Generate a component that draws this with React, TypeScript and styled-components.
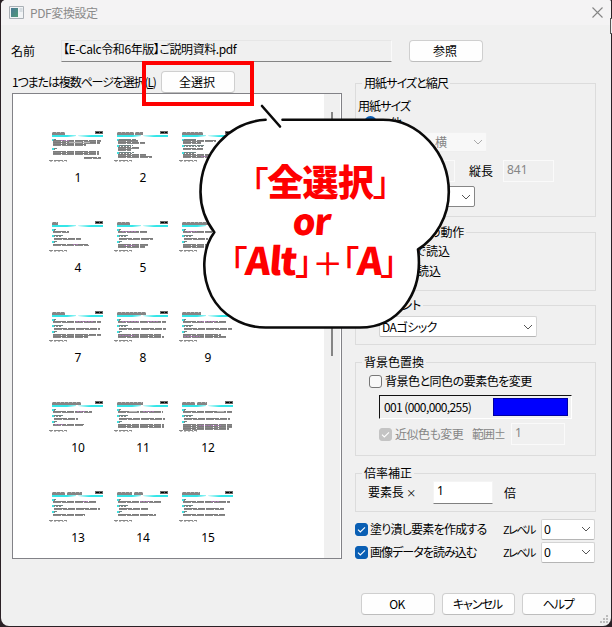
import React from 'react';
import styled, { createGlobalStyle, css } from 'styled-components';

const GlobalStyle = createGlobalStyle`
  * { box-sizing: border-box; }
  body {
    margin: 0;
    background: #2b2126;
    font-family: 'Noto Sans', 'Noto Sans CJK JP', sans-serif;
    font-size: 12px;
    color: #000;
    overflow: hidden;
  }
`;

const Dialog = styled.div`
  position: relative;
  width: 610px;
  height: 626px;
  margin-left: 1px;
  background: #f0f0f0;
  border-radius: 5px 2px 8px 8px;
  overflow: hidden;
`;

const TitleBar = styled.header`
  display: flex;
  align-items: center;
  height: 25px;
  padding: 0 8px;
  background: #f4f3f4;
  svg { display: block; }
`;

const Label = styled.span<{ $ls?: number; $dim?: boolean; $w?: number; $size?: number }>`
  display: block;
  flex: none;
  white-space: nowrap;
  line-height: 16px;
  font-family: 'Noto Sans CJK JP', sans-serif;
  font-feature-settings: 'palt';
  font-size: ${p => p.$size ?? 12}px;
  letter-spacing: ${p => p.$ls ?? 0}px;
  ${p => p.$w && css`width: ${p.$w}px;`}
  ${p => p.$dim && css`color: #858585;`}
`;

const Title = styled(Label)`
  flex: 1;
  margin-left: 6px;
  color: #8a8a8a;
`;

const FileRow = styled.div`
  display: flex;
  align-items: center;
  height: 21px;
  margin: 15px 0 0 10px;
`;

const FileField = styled.div`
  display: flex;
  align-items: center;
  width: 331px;
  height: 22px;
  margin-right: 17px;
  padding: 0 0 3px 1px;
  border: 1px solid #e6e6e6;
  border-right-color: #fafafa;
  border-bottom: 1px solid #858585;
`;

const Button = styled.button`
  display: flex;
  align-items: center;
  justify-content: center;
  width: 74px;
  height: 22px;
  padding: 0 2px 0 0;
  background: #fefefe;
  border: 1px solid #cfcfcf;
  border-bottom-color: #bdbdbd;
  border-radius: 4px;
  color: #000;
`;

const Columns = styled.main`
  display: flex;
  margin: 10px 0 0 11px;
`;

const Left = styled.section`
  width: 343px;
`;

const SelectRow = styled.div`
  display: flex;
  align-items: center;
  height: 22px;
  button { margin-left: auto; margin-right: 120px; }
`;

const PageList = styled.div`
  display: flex;
  justify-content: space-between;
  width: 330px;
  height: 466px;
  background: #fff;
  border: 1px solid #828287;
`;

const PageGrid = styled.div`
  display: grid;
  grid-template-columns: repeat(3, 65px);
  grid-auto-rows: 90px;
  padding: 37px 0 0 34px;
`;

const Page = styled.figure`
  display: flex;
  flex-direction: column;
  align-items: center;
  width: 62px;
  margin: 0;
  svg { display: block; margin-right: 2px; }
`;

const PageNumber = styled.figcaption`
  margin-top: 7px;
  line-height: 16px;
  font-size: 12px;
`;

const ScrollTrack = styled.div`
  display: flex;
  justify-content: center;
  width: 16px;
  margin-right: 1px;
  padding: 18px 0 0 0;
  background: #f0f0f0;
`;

const ScrollThumb = styled.div`
  width: 2px;
  height: 244px;
  background: #858585;
`;

const Right = styled.section`
  width: 241px;
  padding-top: 5px;
`;

const Group = styled.fieldset<{ $h: number; $pad: number; $gap: number }>`
  width: 241px;
  height: ${p => p.$h}px;
  min-width: 0;
  margin: 0 0 ${p => p.$gap}px;
  padding: ${p => p.$pad}px 0 0 0;
  border: 1px solid #dcdcdc;
`;

const Legend = styled.legend<{ $x?: number }>`
  height: 14px;
  margin-left: ${p => p.$x ?? 6}px;
  padding: 0 2px;
  > span { line-height: 14px; }
`;

const Row = styled.div<{ $h: number; $x?: number; $mt?: number }>`
  display: flex;
  align-items: center;
  height: ${p => p.$h}px;
  margin: ${p => p.$mt ?? 0}px 0 0 ${p => p.$x ?? 0}px;
`;

const Gap = styled.span<{ $w: number }>`
  flex: none;
  width: ${p => p.$w}px;
`;

const Combo = styled.div<{ $w: number; $tone?: 'disabled' | 'strong'; $h?: number }>`
  display: flex;
  flex: none;
  align-items: center;
  justify-content: space-between;
  width: ${p => p.$w}px;
  height: ${p => p.$h ?? 21}px;
  padding: 0 3px 0 2px;
  background: ${p => (p.$tone === 'disabled' ? '#f8f8f8' : '#fff')};
  color: ${p => (p.$tone === 'disabled' ? '#858585' : '#000')};
  border: 1px solid ${p => (p.$tone === 'disabled' ? '#f1f1f1' : p.$tone === 'strong' ? '#868686' : '#d4d4d4')};
  border-bottom-color: ${p => (p.$tone === 'disabled' ? '#eee' : p.$tone === 'strong' ? '#868686' : '#b5b5b5')};
  border-radius: 2px;
`;

const Input = styled.div<{ $w: number; $disabled?: boolean; $h?: number }>`
  flex: none;
  width: ${p => p.$w}px;
  height: ${p => p.$h ?? 22}px;
  padding-left: 3px;
  line-height: 18px;
  background: ${p => (p.$disabled ? '#f0f0f0' : '#fff')};
  color: ${p => (p.$disabled ? '#858585' : '#000')};
  border: 1px solid ${p => (p.$disabled ? '#fafafa' : '#f4f4f4')};
  border-bottom-color: ${p => (p.$disabled ? '#fafafa' : '#808080')};
`;

const Radio = styled.span<{ $on?: boolean }>`
  flex: none;
  width: 13px;
  height: 13px;
  margin-right: 4px;
  border: ${p => (p.$on ? '4px solid #0a5fb4' : '1px solid #808080')};
  border-radius: 50%;
  background: #fff;
`;

const Box = styled.span<{ $tone?: 'on' | 'disabled' }>`
  display: flex;
  flex: none;
  align-items: center;
  justify-content: center;
  width: 13px;
  height: 13px;
  margin-right: 2px;
  border-radius: 3px;
  border: 1px solid ${p => (p.$tone === 'on' ? '#0a5fb4' : p.$tone === 'disabled' ? '#c4c4c4' : '#777')};
  background: ${p => (p.$tone === 'on' ? '#0a5fb4' : p.$tone === 'disabled' ? '#c4c4c4' : '#f8f8f8')};
`;

const ColorField = styled.div`
  display: flex;
  align-items: center;
  justify-content: space-between;
  width: 193px;
  height: 24px;
  margin: 7px 0 0 23px;
  padding: 0 3px 1px 4px;
  border: 1px solid #fff;
  border-top-color: #111;
  border-left-color: #111;
`;

const Swatch = styled.span`
  width: 75px;
  height: 18px;
  background: #0000fe;
  border: 1px solid #0000a0;
`;

const Footer = styled.footer`
  display: flex;
  gap: 7px;
  margin: 30px 0 0 6px;
`;

const Highlight = styled.div`
  position: absolute;
  left: 142px;
  top: 61px;
  width: 112px;
  height: 45px;
  border: 4px solid #fe0000;
`;

const Balloon = styled.div`
  position: absolute;
  left: 190px;
  top: 95px;
  width: 270px;
  height: 240px;
  > svg { position: absolute; inset: 0; }
`;

const BalloonText = styled.div`
  padding-top: 65px;
`;

const BalloonLine = styled.div<{ $h: number; $ls: number; $x: number }>`
  position: relative;
  width: max-content;
  height: ${p => p.$h}px;
  line-height: ${p => p.$h}px;
  margin-left: ${p => p.$x}px;
  font-family: 'Noto Sans CJK JP', sans-serif;
  font-feature-settings: 'palt';
  font-weight: 900;
  font-size: 36px;
  letter-spacing: ${p => p.$ls}px;
  color: #fe0000;
  white-space: nowrap;
`;

const Bracket = styled.span<{ $pull?: number; $size?: number }>`
  font-weight: 500;
  font-size: ${p => p.$size ?? 34}px;
  margin-right: ${p => p.$pull ?? 0}px;
`;

const Latin = styled.span<{ $ls?: number; $size?: number }>`
  display: inline-block;
  font-size: ${p => p.$size ?? 36}px;
  letter-spacing: ${p => p.$ls ?? 0}px;
  transform: skewX(-5deg);
`;

const Grip = styled.div`
  position: absolute;
  right: 2px;
  bottom: 2px;
  svg { display: block; }
`;

const Corner = styled.div`
  position: absolute;
  left: 610px;
  top: 18px;
  width: 2px;
  height: 16px;
  border: 1px solid #555;
  border-right: 0;
  background: #eee;
`;

const Chevron = ({ dim }: { dim?: boolean }) => (
  <svg width="10" height="6" viewBox="0 0 10 6" fill="none" stroke={dim ? '#aaa' : '#555'} strokeWidth="1">
    <path d="M1 1l4 4 4-4" />
  </svg>
);

const Check = () => (
  <svg width="9" height="9" viewBox="0 0 9 9" fill="none" stroke="#fff" strokeWidth="1.1">
    <path d="M1 4.7l2.3 2.2L8 2.4" />
  </svg>
);

// Body strokes of a page preview: x, y, width, kind (0 text, 1 section mark, 2 tinted text, 3 pale text)
type Stroke = [number, number, number, number?];
type Preview = { title: [number, number][]; lines: Stroke[] };

const body = (a: number, b: number, c: number, extra: Stroke[] = []): Stroke[] => [
  [4, 8, 3, 1], [4, 10, a], [4, 14, 10, 1], [5, 17, b], [4, 20, 4, 1], [4, 23, c], ...extra,
];

const previews: Preview[] = [
  { title: [[3, 13]], lines: [[4, 8, 3, 1], [4, 9, 48], [12, 9, 8, 2], [4, 11, 47], [20, 11, 22, 3], [4, 13, 33], [4, 17, 4, 1], [4, 20, 46], [4, 22, 46], [35, 26, 17]] },
  { title: [[3, 17], [21, 8]], lines: [[4, 8, 18, 1], [4, 9, 20], [4, 11, 27], [4, 14, 15, 1], [4, 16, 22], [4, 18, 13], [4, 21, 16, 1], [4, 23, 28], [4, 25, 34]] },
  { title: [[3, 21]], lines: [[4, 8, 14, 1], [4, 9, 33], [4, 11, 18], [4, 14, 22, 1], [4, 17, 20], [4, 21, 14, 1], [4, 23, 30], [4, 25, 24], [22, 25, 10, 2]] },
  { title: [[3, 6]], lines: body(16, 27, 36, [[24, 23, 6, 2]]) },
  { title: [[3, 13]], lines: body(29, 34, 30, [[8, 10, 14, 2], [4, 25, 27], [10, 24, 12, 2]]) },
  { title: [[3, 29]], lines: body(29, 24, 32, [[4, 25, 32], [8, 10, 10, 2]]) },
  { title: [[3, 13]], lines: body(48, 46, 48, [[27, 10, 17, 2], [4, 25, 35]]) },
  { title: [[3, 29]], lines: body(48, 47, 44, [[8, 10, 17, 2], [33, 10, 12, 2], [4, 25, 46], [5, 24, 16, 2]]) },
  { title: [[3, 19]], lines: body(44, 48, 38, [[20, 10, 17, 2], [4, 25, 44], [5, 25, 16, 2]]) },
  { title: [[3, 29]], lines: body(39, 24, 31, [[28, 10, 8, 2], [6, 23, 8, 2]]) },
  { title: [[3, 26]], lines: body(45, 46, 46, [[15, 10, 8, 3], [29, 10, 12, 2], [4, 25, 46]]) },
  { title: [[3, 13], [18, 10]], lines: body(49, 46, 49, [[38, 10, 7, 3], [4, 25, 49], [20, 24, 22, 2], [4, 27, 46]]) },
  { title: [[3, 13], [18, 15]], lines: body(44, 46, 32, [[34, 10, 6, 2]]) },
  { title: [[3, 15], [20, 9]], lines: body(44, 29, 38, [[26, 10, 10, 2]]) },
  { title: [[3, 18]], lines: body(47, 40, 42, [[32, 10, 8, 2]]) },
];

const strokeColor = ['#7c7c7c', '#6f8585', '#a878b0', '#b8b8b8'];

const PagePreview = ({ title, lines }: Preview) => (
  <svg width="56" height="32" viewBox="0 0 56 32" shapeRendering="crispEdges" fill="none">
    {title.map(([x, w], i) => (
      <g key={i}>
        <rect x={x} y="1" width={w} height="3" fill="#858585" />
        <path d={`M${x} 1.5h${w}`} stroke="#bbb" strokeDasharray="1 3" />
      </g>
    ))}
    <path d="M3 4h15l9 .600v.400l-9 1H3zM54 4H43l-14 .800v.300L40 6h14z" fill="#35e6e8" shapeRendering="auto" />
    <path d="M3 4.500h13M46 4.500h8M3 5.500h14M41 5.500h13" stroke="#35e6e8" />
    <rect x="46" y="0" width="8" height="3" fill="#666" />
    <path d="M47 1.500h6" stroke="#000" strokeDasharray="3 1" />
    {lines.map(([x, y, w, kind = 0], i) => (
      <g key={i}>
        <path d={`M${x} ${y + 0.5}h${w}`} stroke={strokeColor[kind]} strokeDasharray={kind === 2 ? '2 1' : '13 1 7 1'} />
        {kind === 0 && <path d={`M${x} ${y + 1.5}h${w}`} stroke="#888" strokeDasharray="8 1 12 1" />}
        {kind === 1 && <path d={`M${x} ${y + 1.5}h${Math.max(3, w - 2)}`} stroke="#858585" strokeDasharray="2 1" />}
        {kind === 1 && <path d={`M3 ${y}h2v2h-2z`} fill="#43dede" />}
      </g>
    ))}
    <path d="M0 29.500h18" stroke="#8a8a8a" strokeDasharray="4 1 9 1" />
    <path d="M1 30.500h17" stroke="#bbb" strokeDasharray="2 2" />
  </svg>
);

const App = () => (
  <>
    <GlobalStyle />
    <Dialog>
      <TitleBar>
        <svg width="15" height="13" viewBox="0 0 15 13">
          <defs>
            <linearGradient id="appIcon" x1="0" y1="0" x2="1" y2="1">
              <stop offset="0" stopColor="#4b7896" />
              <stop offset="1" stopColor="#4f9a78" />
            </linearGradient>
          </defs>
          <path d="M.5.5h14v12H.5z" fill="#f2f4f6" stroke="#aab0b6" />
          <path d="M2 2h7v9H2z" fill="url(#appIcon)" />
          <path d="M10.500 3h3M10.500 5h3" stroke="#b9c4cc" />
        </svg>
        <Title $ls={-0.4}>PDF変換設定</Title>
        <svg width="11" height="11" viewBox="0 0 11 11" stroke="#858585" strokeWidth="1.1">
          <path d="M.5.5l10 10M10.500.5l-10 10" />
        </svg>
      </TitleBar>

      <FileRow>
        <Label $w={50}>名前</Label>
        <FileField><Label $ls={-0.42}>【E-Calc令和6年版】ご説明資料.pdf</Label></FileField>
        <Button><Label>参照</Label></Button>
      </FileRow>

      <Columns>
        <Left>
          <SelectRow>
            <Label $ls={-1.12}>1つまたは複数ページを選択(<u>L</u>)</Label>
            <Button><Label>全選択</Label></Button>
          </SelectRow>
          <PageList>
            <PageGrid>
              {previews.map((p, i) => (
                <Page key={i}>
                  <PagePreview {...p} />
                  <PageNumber>{i + 1}</PageNumber>
                </Page>
              ))}
            </PageGrid>
            <ScrollTrack><ScrollThumb /></ScrollTrack>
          </PageList>
        </Left>

        <Right>
          <Group $h={141} $pad={8} $gap={8}>
            <Legend><Label $ls={-0.9}>用紙サイズと縮尺</Label></Legend>
            <Row $h={16} $x={2}><Label $ls={-0.9}>用紙サイズ</Label></Row>
            <Row $h={17} $x={8}><Radio $on /><Gap $w={9} /><Label $size={12}>他</Label></Row>
            <Row $h={21} $x={23}><Combo $w={108} $h={20} $tone="disabled"><Gap $w={50} /><Label $dim>横</Label><Gap $w={20} /><Chevron dim /></Combo></Row>
            <Row $h={22} $x={48} $mt={8}>
              <Input $w={51} $disabled />
              <Gap $w={14} />
              <Label $w={34}>縦長</Label>
              <Input $w={51} $disabled>841</Input>
            </Row>
            <Row $h={21} $x={23} $mt={4}><Combo $w={96} $tone="strong"><span /><Chevron /></Combo></Row>
          </Group>

          <Group $h={66} $pad={4} $gap={7}>
            <Legend $x={71}><Label $ls={-0.1}>の動作</Label></Legend>
            <Row $h={16} $x={8}><Radio $on /><Gap $w={34} /><Label $ls={-0.1}>で読込</Label></Row>
            <Row $h={16} $x={8} $mt={4}><Radio /><Gap $w={36} /><Label>読込</Label></Row>
          </Group>

          <Group $h={47} $pad={4} $gap={10}>
            <Legend $x={24}><Label>フォント</Label></Legend>
            <Row $h={21} $x={23}><Combo $w={158}><Label $ls={-0.5}>DAゴシック</Label><Chevron /></Combo></Row>
          </Group>

          <Group $h={101} $pad={5} $gap={10}>
            <Legend><Label>背景色置換</Label></Legend>
            <Row $h={14} $x={13}><Box /><Gap $w={1} /><Label $ls={-0.5}>背景色と同色の要素色を変更</Label></Row>
            <ColorField><Label $ls={-0.6}>001 (000,000,255)</Label><Swatch /></ColorField>
            <Row $h={22} $x={23} $mt={4}>
              <Box $tone="disabled"><Check /></Box>
              <Gap $w={1} />
              <Label $dim $w={77} $ls={-0.5}>近似色も変更</Label>
              <Label $dim $w={39} $ls={-1}>範囲±</Label>
              <Input $w={54} $disabled>1</Input>
            </Row>
          </Group>

          <Group $h={46} $pad={1} $gap={6}>
            <Legend><Label>倍率補正</Label></Legend>
            <Row $h={23} $x={12}>
              <Label $w={50} $ls={-0.1}>要素長 <small>×</small></Label>
              <Gap $w={15} />
              <Input $w={60} $h={23}>1</Input>
              <Gap $w={11} />
              <Label>倍</Label>
            </Row>
          </Group>

          <Row $h={22}>
            <Box $tone="on"><Check /></Box>
            <Label $w={133} $ls={-0.75}>塗り潰し要素を作成する</Label>
            <Label $w={38} $size={11} $ls={-1.5}>Zレベル</Label>
            <Combo $w={54}><span>0</span><Chevron /></Combo>
          </Row>
          <Row $h={22} $mt={1}>
            <Box $tone="on"><Check /></Box>
            <Label $w={133} $ls={-0.95}>画像データを読み込む</Label>
            <Label $w={38} $size={11} $ls={-1.5}>Zレベル</Label>
            <Combo $w={54}><span>0</span><Chevron /></Combo>
          </Row>

          <Footer>
            <Button><Label $ls={-0.8}>OK</Label></Button>
            <Button><Label $ls={-1}>キャンセル</Label></Button>
            <Button><Label $ls={-1.2}>ヘルプ</Label></Button>
          </Footer>
        </Right>
      </Columns>

      <Grip>
        <svg width="9" height="9" viewBox="0 0 9 9" fill="#bcbcbc">
          <path d="M6 0h2v2H6zM3 3h2v2H3zM6 3h2v2H6zM0 6h2v2H0zM3 6h2v2H3zM6 6h2v2H6z" />
        </svg>
      </Grip>
    </Dialog>

    <Corner />
    <Highlight />

    <Balloon>
      <svg width="270" height="240" viewBox="0 0 270 240" fill="none" stroke="#0a0a0a" strokeWidth="2.6" strokeLinecap="round" strokeLinejoin="round">
        <path
          stroke="none"
          fill="#fff"
          d="M76 24.600C40 26 10 58 10 97c0 16 6 30 14 40.300C12 154 11 180 21.500 201c10 19 31 31.500 54 31.500H170c38 0 64-34 58-78.200 18-11 30.800-33 30.800-57.300 0-39-30-72.300-66-72.300z"
        />
        <path d="M75.600 24.800C39 27 10.500 58 10.500 97c0 16 6 30 13.800 40.300C12 154 11 180 21.500 201c10 19 31 31.500 54 31.500H170c38 0 64-34 58-78.200 18-11 30.800-33 30.800-57.300 0-39-30-72.300-66-72.300H92.500" />
        <path d="M72 11l18 20.500" />
      </svg>
      <BalloonText>
        <BalloonLine $h={40} $ls={-0.7} $x={61}><Bracket>「</Bracket>全選択<Bracket>」</Bracket></BalloonLine>
        <BalloonLine $h={39} $ls={0} $x={103}><Latin $ls={-1}>or</Latin></BalloonLine>
        <BalloonLine $h={39} $ls={-0.4} $x={40}>
          <Bracket $pull={-1}>「</Bracket><Latin $ls={-1.5} $size={38}>Alt</Latin><Bracket>」</Bracket><Bracket $size={31} $pull={-1}>＋</Bracket><Bracket $pull={-1}>「</Bracket><Latin $ls={-2} $size={38}>A</Latin><Bracket>」</Bracket>
        </BalloonLine>
      </BalloonText>
    </Balloon>
  </>
);

export default App;
